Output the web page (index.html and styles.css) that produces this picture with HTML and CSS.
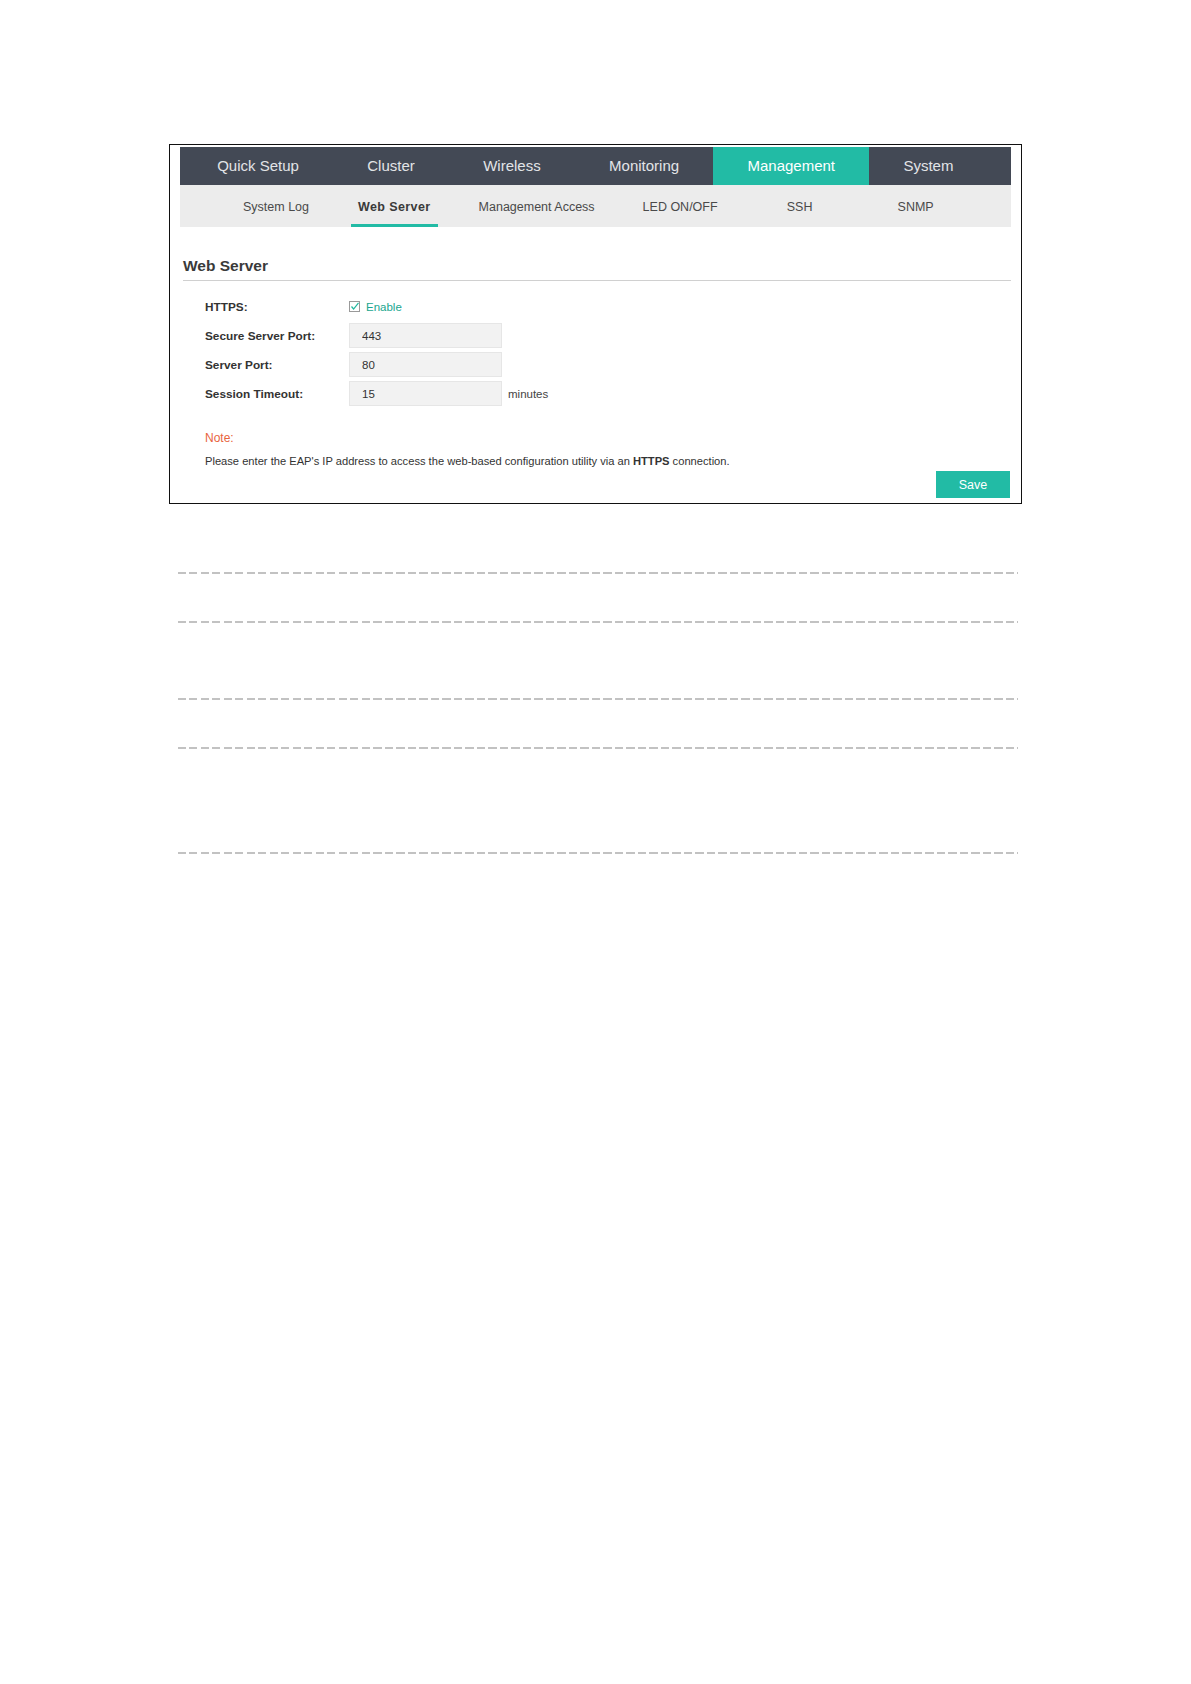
FILE: index.html
```html
<!DOCTYPE html>
<html lang="en">
<head>
  <meta charset="UTF-8" />
  <title>Web Server</title>
  <link rel="stylesheet" href="styles.css">
</head>
<body>
  <div class="frame">
    <ul class="main-nav">
      <li>Quick Setup</li>
      <li>Cluster</li>
      <li>Wireless</li>
      <li>Monitoring</li>
      <li class="active">Management</li>
      <li>System</li>
    </ul>
    <ul class="sub-nav">
      <li><span>System Log</span></li>
      <li class="active"><span>Web Server</span></li>
      <li><span>Management Access</span></li>
      <li><span>LED ON/OFF</span></li>
      <li><span>SSH</span></li>
      <li><span>SNMP</span></li>
    </ul>

    <h2 class="section-title">Web Server</h2>

    <div class="form">
      <div class="form-row">
        <label class="form-label">HTTPS:</label>
        <span class="check">
          <svg width="11" height="11" viewBox="0 0 11 11">
            <rect x="0.5" y="0.5" width="10" height="10" fill="#fff" stroke="#9a9a9a" />
            <path d="M2.5 5.5 L4.6 8 L9.5 1.8" fill="none" stroke="#22b89f" stroke-width="1.2" />
          </svg>
          Enable
        </span>
      </div>
      <div class="form-row">
        <label class="form-label">Secure Server Port:</label>
        <input class="text-input" type="text" value="443">
      </div>
      <div class="form-row">
        <label class="form-label">Server Port:</label>
        <input class="text-input" type="text" value="80">
      </div>
      <div class="form-row">
        <label class="form-label">Session Timeout:</label>
        <input class="text-input" type="text" value="15">
        <span class="unit">minutes</span>
      </div>
    </div>

    <div class="note-title">Note:</div>
    <p class="note-text">Please enter the EAP's IP address to access the web-based configuration utility via an <b>HTTPS</b> connection.</p>

    <div class="actions">
      <button class="btn-save">Save</button>
    </div>
  </div>

  <div class="doc-lines">
    <div class="dash first"></div>
    <div class="dash near"></div>
    <div class="dash far"></div>
    <div class="dash near"></div>
    <div class="dash farthest"></div>
  </div>
</body>
</html>
```

FILE: styles.css
```css
body {
  margin: 0;
  background-color: #fff;
  font-family: "Liberation Sans", Arial, sans-serif;
  color: #333;
}
ul {
  list-style: none;
  margin: 0;
  padding: 0;
}
.frame {
  width: 831px;
  margin: 144px 0 0 169px;
  padding: 2px 10px 5px 10px;
  border: 1px solid #111;
}

/* top navigation */
.main-nav {
  display: flex;
  height: 38px;
  padding-left: 3px;
  background-color: #434955;
}
.main-nav li {
  padding: 0 34.2px;
  line-height: 38px;
  font-size: 15px;
  color: #e2e4e7;
}
.main-nav li.active {
  background-color: #22bba5;
  color: #fff;
}

/* second level tabs */
.sub-nav {
  display: flex;
  height: 42px;
  padding-left: 38px;
  background-color: #ececec;
}
.sub-nav li {
  display: flex;
  justify-content: center;
  min-width: 82px;
  padding: 0 17px;
  font-size: 12.5px;
  color: #4a4a4a;
}
.sub-nav li span {
  display: block;
  padding: 5px 7px 0 7px;
  line-height: 34px;
  border-bottom: 3px solid transparent;
}
.sub-nav li.active span {
  font-weight: bold;
  letter-spacing: 0.4px;
  color: #3a3a3a;
  border-bottom-color: #22bba5;
}

.section-title {
  margin: 29px 0 0 3px;
  padding: 0 0 4px 0;
  font-size: 15.5px;
  line-height: 20px;
  color: #3a3a3a;
  border-bottom: 1px solid #d0d0d0;
}

/* form */
.form {
  display: flex;
  flex-direction: column;
  gap: 4px;
  margin-top: 13px;
  padding-left: 25px;
}
.form-row {
  display: flex;
  align-items: center;
  height: 25px;
  font-size: 11.5px;
}
.form-label {
  width: 144px;
  font-weight: bold;
  font-size: 11.8px;
  color: #333;
}
.check {
  display: flex;
  align-items: center;
  gap: 6px;
  color: #1aa68f;
}
.text-input {
  box-sizing: border-box;
  width: 153px;
  height: 25px;
  padding: 0 12px;
  border: 1px solid #e6e6e6;
  background-color: #f2f2f2;
  font-family: inherit;
  font-size: 11.5px;
  color: #333;
}
.unit {
  margin-left: 6px;
  color: #444;
}

.note-title {
  margin-top: 24px;
  padding-left: 25px;
  font-size: 12px;
  line-height: 16px;
  color: #e8643e;
}
.note-text {
  margin: 7px 0 0 0;
  padding-left: 25px;
  font-size: 11.15px;
  line-height: 16px;
  color: #333;
}

.actions {
  display: flex;
  justify-content: flex-end;
  margin-top: 2px;
  padding-right: 1px;
}
.btn-save {
  width: 74px;
  height: 27px;
  border: none;
  background-color: #22bba5;
  color: #fff;
  font-family: inherit;
  font-size: 12.5px;
}

/* dashed separators of the surrounding document */
.doc-lines {
  width: 840px;
  margin-left: 178px;
}
.dash {
  height: 2px;
  background: repeating-linear-gradient(90deg, #c2c2c2 0 8px, transparent 8px 11.5px);
}
.dash.first { margin-top: 68px; }
.dash.near { margin-top: 47px; }
.dash.far { margin-top: 75px; }
.dash.farthest { margin-top: 103px; }
```
